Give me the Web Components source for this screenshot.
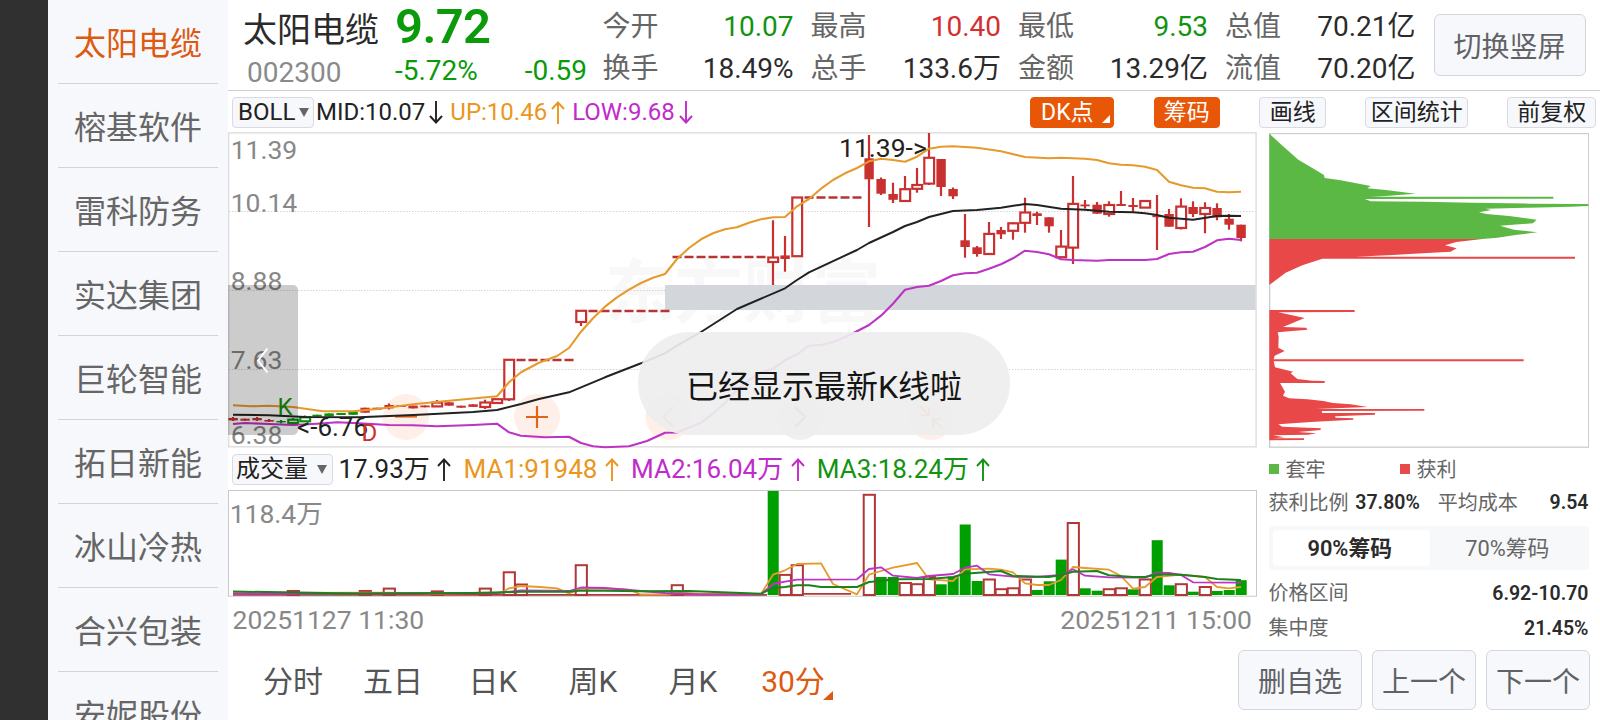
<!DOCTYPE html>
<html lang="zh-CN">
<head>
<meta charset="utf-8">
<title>太阳电缆 002300</title>
<style>
    body{
        margin: 0;
        width: 1600px;
        height: 720px;
        overflow: hidden;
        background: #fff;
        font-family: Roboto, "Noto Sans CJK SC", sans-serif;
    }
</style>
</head>
<body>
<stock-app></stock-app>

<script>
const make = (html) => {
    const template = document.createElement('template');
    template.innerHTML = html;
    return template;
};

class BaseElement extends HTMLElement {
    constructor(){
        super();
        this.attachShadow({mode:'open'});
        this.shadowRoot.appendChild(this.constructor.template.content.cloneNode(true));
    }
}

/* ---------- sidebar ---------- */

class StockItem extends BaseElement {
    static template = make(`
        <style>
            :host{
                display: block;
                flex: none;
                box-sizing: border-box;
                height: 84px;
                margin: 0 10px;
                border-bottom: 1px solid #d3d4d6;
                text-align: center;
                font-size: 32px;
                line-height: 89px;
                color: #666;
            }
            :host([active]){ color: #dc5a12; }
        </style>
        <slot></slot>
    `);
}

class StockList extends BaseElement {
    static template = make(`
        <style>
            :host{
                display: flex;
                flex-direction: column;
                flex: none;
                box-sizing: border-box;
                width: 228px;
                height: 720px;
                border-left: 48px solid #303030;
                background: #f7f8fb;
                overflow: hidden;
            }
        </style>
        <slot></slot>
    `);
}

/* ---------- header ---------- */

class QuoteStat extends BaseElement {
    static template = make(`
        <style>
            :host{
                display: flex;
                justify-content: space-between;
                height: 42px;
                line-height: 42px;
                font-size: 28px;
                color: #2b2b2b;
                white-space: nowrap;
            }
            .label{ color: #666; }
            :host([dir-up]){ color: #d33030; }
            :host([dir-down]){ color: #129312; }
        </style>
        <span class="label"></span><span><slot></slot></span>
    `);
    connectedCallback(){
        this.shadowRoot.querySelector('.label').textContent = this.getAttribute('label');
    }
}

class PlainButton extends BaseElement {
    static template = make(`
        <style>
            :host{
                display: flex;
                flex: none;
                align-items: center;
                justify-content: center;
                box-sizing: border-box;
                padding-top: 5px;
                border: 1px solid #d2d6dd;
                border-radius: 6px;
                background: #f7f8fb;
                font-size: 28px;
                line-height: 1;
                color: #606266;
                white-space: nowrap;
            }
        </style>
        <slot></slot>
    `);
}

class QuoteHeader extends BaseElement {
    static template = make(`
        <style>
            :host{
                display: flex;
                box-sizing: border-box;
                height: 91px;
                border-bottom: 1px solid #d0d0d0;
            }
            .name, .price{ flex: none; box-sizing: border-box; }
            .name{ width: 165px; padding-left: 15px; }
            .name div:first-child{ font-size: 34px; line-height: 56px; padding-top: 2px; color: #2b2b2b; }
            .name div:last-child{ font-size: 28px; line-height: 30px; padding-left: 4px; color: #8a8a8a; }
            .price{ width: 194px; padding-left: 2px; color: #0a9a0a; }
            .price b{ display: block; font-size: 49px; line-height: 54px; font-weight: 600; letter-spacing: -.6px; }
            .price div{ display: flex; justify-content: space-between; padding-top: 1px; font-size: 28px; line-height: 32px; }
            .stats{ display: grid; flex: none; grid-template-columns: 191px 190.5px 190px 190.5px; column-gap: 17px; align-content: start; padding: 6px 0 0 15.5px; }
            plain-button{ width: 152px; height: 62px; margin: 14px 0 0 18px; }
        </style>
        <div class="name"><div>太阳电缆</div><div>002300</div></div>
        <div class="price"><b>9.72</b><div><span>-5.72%</span><span>-0.59</span></div></div>
        <div class="stats">
            <quote-stat label="今开" dir-down>10.07</quote-stat>
            <quote-stat label="最高" dir-up>10.40</quote-stat>
            <quote-stat label="最低" dir-down>9.53</quote-stat>
            <quote-stat label="总值">70.21亿</quote-stat>
            <quote-stat label="换手">18.49%</quote-stat>
            <quote-stat label="总手">133.6万</quote-stat>
            <quote-stat label="金额">13.29亿</quote-stat>
            <quote-stat label="流值">70.20亿</quote-stat>
        </div>
        <plain-button>切换竖屏</plain-button>
    `);
}

/* ---------- indicator rows ---------- */

class IndicatorValue extends BaseElement {
    static template = make(`
        <style>
            :host{ display: flex; align-items: center; white-space: nowrap; }
            svg{ margin: 0 var(--after, 8px) 0 var(--before, 5px); }
            :host([down]) svg{ transform: scaleY(-1); }
        </style>
        <slot></slot>
        <svg width="14" height="23" viewBox="0 0 14 23" fill="none" stroke="currentColor" stroke-width="1.9"><path d="M7 23V1.5M1 8 7 1.5l6 6.5"/></svg>
    `);
}

class DropBox extends BaseElement {
    static template = make(`
        <style>
            :host{
                display: flex;
                flex: none;
                align-items: center;
                justify-content: space-between;
                box-sizing: border-box;
                height: 31px;
                padding: 0 4.5px;
                border: 1px solid #d9dbe0;
                border-radius: 4px;
                background: #f7f8fb;
                font-size: 24px;
                line-height: 29px;
                color: #222;
            }
        </style>
        <slot></slot>
        <svg width="10" height="9" viewBox="0 0 10 9"><path d="M0 0h10L5 9z" fill="#666"/></svg>
    `);
}

class ToolChip extends BaseElement {
    static template = make(`
        <style>
            :host{
                display: flex;
                flex: none;
                align-items: center;
                justify-content: center;
                position: relative;
                box-sizing: border-box;
                height: 31px;
                border: 1px solid #d9dbe0;
                border-radius: 4px;
                background: #f7f8fb;
                font-size: 23px;
                line-height: 29px;
                color: #222;
                white-space: nowrap;
            }
            :host([on]){ border-color: #e85708; background: #e85708; color: #fff; }
            svg{ display: none; position: absolute; right: 3px; bottom: 4px; }
            :host([more]) svg{ display: block; }
            :host([more]){ padding-right: 9px; }
        </style>
        <slot></slot>
        <svg width="8" height="8"><path d="M8 0v8H0z" fill="#fff"/></svg>
    `);
}

class IndicatorBar extends BaseElement {
    static template = make(`
        <style>
            :host{ display: flex; align-items: center; box-sizing: border-box; height: 41px; padding: 1px 3.7px 0 4px; font-size: 24px; line-height: 30px; --before: 4px; --after: 7px; }
            drop-box{ width: 82px; margin-right: 2px; padding-left: 5px; }
            .tools{ display: flex; margin-left: auto; }
        </style>
        <drop-box>BOLL</drop-box>
        <indicator-value style="color:#222" down>MID:10.07</indicator-value>
        <indicator-value style="color:#ea9620">UP:10.46</indicator-value>
        <indicator-value style="color:#c02bcb" down>LOW:9.68</indicator-value>
        <div class="tools">
            <tool-chip on more style="width:84px;margin-right:40px">DK点</tool-chip>
            <tool-chip on style="width:66px;margin-right:39.5px">筹码</tool-chip>
            <tool-chip style="width:67px;margin-right:39px">画线</tool-chip>
            <tool-chip style="width:103px;margin-right:39px">区间统计</tool-chip>
            <tool-chip style="width:89px">前复权</tool-chip>
        </div>
    `);
}

/* ---------- charts ---------- */

const STEP = 12, FIRST = 233;
const cx = (i) => FIRST + i * STEP;
const line = (points, color, width) =>
    `<polyline fill="none" stroke="${color}" stroke-width="${width}" stroke-linejoin="round" points="` +
    points.trim().split(/\s+/).map((p) => { const [i, y] = p.split(':'); return cx(+i) + ',' + y; }).join(' ') + '"/>';

// index, kind (r = red solid, h = red hollow, g = green solid, e = green hollow), body top, body bottom, high, low
const CANDLES = [
    [0,'r',418,420.4,417,421],[1,'r',418.7,420.7],[2,'r',418,420.3,417,421],[3,'r',420,421.6,419,422],
    [4,'g',421,422.4,420,423.5],[5,'e',419.7,423,418,424],[6,'e',417.3,421.3,415.5,422],[7,'g',414.7,416.5],
    [8,'g',413.4,416.4],[9,'g',413,415],[10,'g',412,414.8],[11,'r',407.7,412.7],[12,'r',407.7,409.7],
    [13,'r',405,408.4,403.5,409.5],[14,'r',405,407],[15,'r',405.6,408.4],[16,'r',405.5,407.3],[17,'h',402.6,406.4,400,407],
    [18,'r',402.3,405.7],[19,'r',405.7,407.7],[20,'r',404.3,406.9],[21,'h',402.5,407,399.7,409],[22,'h',399.2,403],
    [23,'h',359.8,399.3,359,401],[29,'h',310.8,322,310,326],
    [45,'h',257.5,262,220.3,285],[46,'r',255.4,259,236,271.7],[47,'h',197.5,256.2],
    [53,'r',158.3,179.3,135,227],[54,'r',179,193.7,177.5,195],[55,'r',194,199.8,182.7,203],[56,'h',189.2,201,176,202],
    [57,'h',185,188.8,168,192.7],[58,'h',157.8,183.6,133,185],[59,'r',159,187,159,196],[60,'r',189,196.3,187.5,199],
    [61,'r',240.3,247,214,257.7],[62,'r',247.3,254,246,256.7],[63,'h',233.9,254,222,255],[64,'r',230,234.3,227,239],
    [65,'h',223.3,230.8,222.5,239.7],[66,'h',212.5,222.8,197.7,232.7],[67,'r',213.3,216,211.7,225],[68,'r',217.3,226.3,217.3,232.7],
    [69,'h',246.6,257.2,230,258],[70,'h',203.9,247.6,176,264],[71,'r',204.5,206.3,200,208.5],[72,'r',204.7,213.7,202,213.7],
    [73,'h',205,214,201.3,216.7],[74,'r',204,206,191,206],[75,'r',205,207,198,211.7],[76,'h',201,207.6],
    [77,'r',215.2,217.2,195,250],[78,'r',214,226.7,209,226.7],[79,'h',206.6,228,198.3,229.5],[80,'r',207,214,201.3,217],
    [81,'h',208,214,202.3,233.3],[82,'r',208,217.3,203.3,220.3],[83,'r',218.7,224.7,214,229.7],[84,'r',224.7,238,224.7,241.3]
];
// limit-up runs: from, to, price level
const FLATS = [[24,28,360],[30,36,311],[37,44,257],[48,52,197.5]];

const RED = '#c93030', GREEN = '#0a920a';

const candle = ([i, kind, top, bottom, high = top, low = bottom]) => {
    const x = cx(i), color = 'ge'.includes(kind) ? GREEN : RED;
    let out = '';
    if (kind === 'h' || kind === 'e') {
        if (high < top) out += `<path d="M${x} ${high}V${top}" stroke="${color}" stroke-width="2.2"/>`;
        if (low > bottom) out += `<path d="M${x} ${bottom}V${low}" stroke="${color}" stroke-width="2.2"/>`;
        out += `<rect x="${x - 4.7}" y="${top}" width="9.8" height="${bottom - top}" fill="#fff" stroke="${color}" stroke-width="2.2"/>`;
    } else {
        out += `<path d="M${x} ${high}V${low}" stroke="${color}" stroke-width="2.2"/>`;
        out += `<rect x="${x - 4.6}" y="${top}" width="9.4" height="${bottom - top}" fill="${color}"/>`;
    }
    return out;
};

const UP = `0:405.3 1.5:406.3 3:405.7 5:407 7.5:411.3 10:411.3 12:409 15:404.3 18:400.7 22:396.3 23:382.3 24:372.3 25.5:362.7 27:356 28:348
    29:331.7 30:318.3 31:306.7 32:297.3 33:289.7 34:283 35:277.7 36:274 37:259 38:248 39:239.3 40:233.3 41:229.3 42:227.3 43:222.7 44:219.3
    45:217.3 46:217 47:206.3 48:199 49:188.7 50:180 51:173.3 52:168 53:161.3 54:158.7 55:160 56:161.7 57:156.7 58:148.7 59:146.7 60:146.3
    62:147.7 64:151.3 66:157 68:158.3 69:157.7 71:158.7 72:160 73:163.3 74:164.7 75:165.3 76:166.7 77:170 78:181.7 79:185.3 80:187.7
    81:188.3 82:191.7 83:192.3 84:191.7`;
const MID = `0:414.7 3:415.3 6:417 10.5:417.3 13:416 15.5:414.7 20:412 22:410 24:404 25.5:399 28:392.3 31:377.3 34:363.3 36:353.3 37:345.7
    39:332 42:309 46:288.3 47:280 48:272.3 52:250 53:243 55:232 56:226 57:222 58:217 60:211 62:210 64:207.7 66:204 67:205 69:208.7 71:209.7
    73:211.7 75:212.3 76:213.3 77:215 78:217.7 80:219.7 82:216 83:215.7 84:216`;
const LOW = `0:424 1:423 3:424 5:425 7:423.7 8.7:422.3 10.5:423.3 13:425 15:425.3 17:426.3 20:425 22:423.7 23:432.3 24:435.7 26:437.3 28:436.7
    29:443 30:446.3 31:447.2 33:446.3 34.5:441 36:432.7 37:432.5 39:422.7 40:413.7 41:402.7 42:390 43:380 44:372.3 45:368.7 46:360.3
    47:354.3 48:345.7 49:345 50:342 51:337.3 52:331.3 53:325 54:315.7 55:303.7 56:289.7 57:287 58:285.7 59:281 60:275.3 61:273.3 62:272.7
    63:268.7 64:264.3 65:258.3 66:250.7 67:252 68:254.3 69:259.3 70:260 72:260.7 73:260 76:260 77:259 78:254 79:252.3 80:251.7 81:247
    82:240.3 83:238.7 84:240`;

class KlineChart extends BaseElement {
    static template = make(`
        <style>
            :host{ display: block; position: relative; height: 316px; }
            svg{ display: block; overflow: visible; }
            text{ font-size: 26px; }
            .toast{
                position: absolute;
                left: 410px;
                top: 200px;
                width: 372px;
                height: 103px;
                border-radius: 52px;
                background: rgba(238, 238, 238, .92);
                text-align: center;
                font-size: 32px;
                line-height: 110px;
                color: #151515;
            }
        </style>
        <svg width="1029" height="316" viewBox="228 132 1029 316"></svg>
        <div class="toast">已经显示最新K线啦</div>
    `);
    connectedCallback(){
        const axis = [['11.39',158.7],['10.14',212],['8.88',289.7],['7.63',368.7],['6.38',443.7]]
            .map(([t, y]) => `<text x="230.7" y="${y}" fill="#888" style="font-size:26.5px">${t}</text>`).join('');
        const grid = [211.5, 290.5, 369.5]
            .map((y) => `<path d="M229 ${y}H1255" stroke="#d4d4d4" stroke-dasharray="1.5 1.5"/>`).join('');
        const flats = FLATS.map(([a, b, y]) => {
            let d = '';
            for (let i = a; i <= b; i++) d += `M${cx(i) - 4.5} ${y}h9`;
            return `<path d="${d}" stroke="#b83434" stroke-width="2.6"/>`;
        }).join('');
        const round = (x, fill, stroke, d) =>
            `<circle cx="${x}" cy="417" r="23" fill="${fill}"/><path transform="translate(${x} 417)" d="${d}" fill="none" stroke="${stroke}" stroke-width="2.2"/>`;
        const buttons =
            round(406, '#fef0e8', '#e0641c', 'M-11-.5H11') +
            round(537, '#fef0e8', '#e0641c', 'M-11 0H11M0-11V11') +
            round(668.5, '#fef0e8', '#f08a50', 'M5-10-5 0 5 10') +
            round(800, '#f0f0f0', '#888', 'M-5-10 5 0-5 10') +
            round(931, '#fef0e8', '#f08a50', 'M-11-11-2-2M-2-10V-2H-10M11 11 2 2M2 10V2H10');
        this.shadowRoot.querySelector('svg').innerHTML = `
            <text x="605" y="317" style="font-size:69px;font-weight:700" fill="#f8f8f8">东方财富</text>
            ${grid}
            <path d="M665 285h591v25H665z" fill="#d3d7dc"/>
            <rect x="228.7" y="132.8" width="1027.4" height="314" fill="none" stroke="#e0e0e0" stroke-width="1.5"/>
            ${axis}${buttons}${flats}${CANDLES.map(candle).join('')}
            ${line(UP, '#e79a2c', 2.1)}${line(MID, '#222', 2)}${line(LOW, '#bd33c4', 2.1)}
            <text x="839" y="156.7" fill="#222" style="font-size:26.5px">11.39-&gt;</text>
            <text x="297" y="436" fill="#222">&lt;-6.76</text>
            <text x="277.5" y="415" style="font-size:24px" fill="#129312">K</text>
            <text x="361.5" y="441.3" style="font-size:24px" fill="#cd2f2f">D</text>
            <path d="M228 285h65a5 5 0 0 1 5 5v140a5 5 0 0 1-5 5h-65z" fill="#000" fill-opacity=".2"/>
            <path d="M267.5 348.5 258 360.5 267.5 372.5" fill="none" stroke="#fff" stroke-width="2"/>`;
    }
}

// index, kind, bar top
const VOLUMES = [
    [5,'h',591],[6,'g',592.5],[7,'g',592.5],[8,'g',593],[9,'g',593],[10,'g',593],[11,'h',591],[13,'h',588.6],[17,'h',591.4],[21,'h',588.6],
    [23,'h',572.3],[24,'h',584.5],[29,'h',565.2],[37,'h',585.2],[45,'g',491],[46,'h',574.9],[47,'h',565.2],[53,'h',494.8],[54,'g',577],
    [55,'g',577],[56,'h',583],[57,'h',584.2],[58,'h',577],[59,'g',584.3],[60,'g',576.7],[61,'g',524.5],[62,'g',581],[63,'h',579.5],
    [64,'h',589.2],[65,'h',588.3],[66,'h',579.5],[67,'g',590],[68,'g',581.3],[69,'g',559.6],[70,'h',523],[71,'g',588.3],[72,'g',590.7],
    [73,'h',589.2],[74,'h',588.3],[75,'g',589.3],[76,'h',579.5],[77,'g',540.2],[78,'g',585.3],[79,'h',584.2],[80,'g',591.7],[81,'h',587],
    [82,'g',591],[83,'g',590],[84,'g',580.2]
];
const MA1 = `0:593 12.8:592.7 17:593.5 22.4:592.5 23:588.3 24:586 25.6:587 27:588.3 28:593.3 29:588.3 32.3:589 33:589.7 34:594.5 36:594.3 37.2:592.7
    39:594 44:594 45:574.7 46:570.3 47:564 49:563.3 50:584 52:594.3 53:574.7 54:571 55:567.7 57:563 58:579.3 60:581 61:569.3 63:568.7 64:569.7
    65:572.3 66:583.3 67:585 68:585 69:580 70:567 71:568 73:569.7 74:576 75:588.7 76:587 77:577 79:574.7 81:577 82:587 83:588.3 84:587`;
const MA2 = `0:594 22:593 24:590.5 28:591 29:587.5 31:588 33:590 36:593 39:594.3 44:594.3 45:584 46:581.7 47:579.7 52:579.3 53:569 54:567.3
    55:575.7 57:578 58:576 60:574 61:567.7 62:565.7 63:574.3 65:576.7 67:577 69:575 70:569.3 71:575.7 73:577.3 76:577.7 77:572.7 78:573
    79:575 80:582.3 84:582.7`;
const MA3 = `0:591.5 10:593.5 20:593 22:592.5 24:591.7 28:591.7 29:590.5 31:590.7 34:591.3 38:591 44:593.7 45:588 46:587 47:585.3 48:585.3
    49:587 52:587 53:582 54:581 55:579.3 58:579 60:577 61:573.7 64:571 65:576 68:577 69:575 70:571.7 72:571 73:575.3 75:577 76:577
    77:574.3 79:574.7 81:577 82:579 84:580`;

class VolumeChart extends BaseElement {
    static template = make(`
        <style>
            :host{ display: block; }
            .bar{ display: flex; align-items: center; height: 42px; padding-left: 4px; font-size: 26px; line-height: 30px; --before: 7.5px; --after: 12.2px; }
            drop-box{ width: 101px; margin-right: 5.5px; padding: 0 5px 0 3px; }
            svg{ display: block; }
            .dates{ display: flex; justify-content: space-between; padding: 6px 5px 0 4.5px; font-size: 26.5px; line-height: 33px; color: #888; }
        </style>
        <div class="bar">
            <drop-box>成交量</drop-box>
            <indicator-value style="color:#222">17.93万</indicator-value>
            <indicator-value style="color:#ea9620">MA1:91948</indicator-value>
            <indicator-value style="color:#c02bcb">MA2:16.04万</indicator-value>
            <indicator-value style="color:#129312">MA3:18.24万</indicator-value>
        </div>
        <svg width="1029" height="107" viewBox="228 490 1029 107"></svg>
        <div class="dates"><span>20251127 11:30</span><span>20251211 15:00</span></div>
    `);
    connectedCallback(){
        const bars = VOLUMES.map(([i, kind, y]) => kind === 'g'
            ? `<rect x="${cx(i) - 5.3}" y="${y}" width="11" height="${595 - y}" fill="#009f00"/>`
            : `<rect x="${cx(i) - 5.3}" y="${y}" width="11.2" height="${595 - y}" fill="#fff" stroke="#b03838" stroke-width="2"/>`).join('');
        this.shadowRoot.querySelector('svg').innerHTML = `
            <rect x="228.5" y="490.5" width="1028" height="105.7" fill="none" stroke="#c8c8c8"/>
            <text x="229.7" y="522.7" font-size="26.5" fill="#888">118.4万</text>
            <path d="M233 594.8H767M791 593.8H851" stroke="#b03838" stroke-width="1.8"/>
            ${bars}${line(MA1, '#e79a2c', 1.8)}${line(MA2, '#bd33c4', 1.8)}${line(MA3, '#1c821c', 2)}`;
    }
}

/* ---------- chip distribution ---------- */

class ChipPanel extends BaseElement {
    static template = make(`
        <style>
            :host{ display: block; width: 320px; font-size: 20px; color: #666; }
            svg{ display: block; }
            .legend, .row, .tabs, .tabs div{ display: flex; align-items: center; }
            .legend{ height: 41px; }
            .legend span{ width: 114px; }
            .legend i{ width: 10px; height: 10px; margin-right: 7px; background: #5cb845; }
            .legend i.red{ background: #e64a4a; }
            .row{ justify-content: space-between; height: 35px; line-height: 35px; }
            .row b{ color: #2b2b2b; font-weight: 600; font-size: 19.5px; }
            .row.top{ height: 26px; line-height: 26px; padding-top: 1px; }
            .tabs{ box-sizing: border-box; height: 44px; margin: 10px 0 6px; padding: 4px; border-radius: 4px; background: #f7f8fa; font-size: 21.8px; line-height: 32px; }
            .tabs div{ box-sizing: border-box; flex: 1; height: 36px; justify-content: center; padding-top: 1px; border-radius: 4px; }
            .tabs .on{ padding-right: 3px; background: #fff; color: #2b2b2b; font-weight: 600; }
        </style>
        <svg width="320" height="315" viewBox="40 24 960 945">
            <rect x="42" y="25.5" width="957" height="941" fill="#fff" stroke="#ccc" stroke-width="4"/>
            <path fill="#5cb845" d="M41 26 78 60 128 104 165 126 205 150 207 159 255 166 345 183 335 190 390 195 480 206 390 213 343 215 893 215V221L328 222 345 229 505 230 648 233 820 236 998 237V243L945 245 820 248 690 251 707 255 670 262 692 267 760 273 843 284 832 295 733 302 775 314 845 322 780 330 725 338 680 342H41z"/>
            <path fill="#e84848" d="M41 342H680L602 351 568 361 603 370 585 380 528 383 410 390 300 395 958 395V401L200 401 140 421 90 443 41 480z"/>
            <path fill="#e84848" d="M41 555H297V561L68 562 147 579 82 606 152 608 155 614 66 622 69 635 68 668 87 678 57 692 54 703H804V709H54L58 727 112 740 105 745 125 762 170 767 207 768V774H73L88 800 82 812 100 820 155 823 203 828 232 834 285 838 336 846 180 852H506V857L198 858 200 864H358V869L238 874 240 878 293 880V884L178 890 122 894 68 898 80 905 195 910V915L127 921 182 925 157 929 52 931 86 937 52 940H145V945L41 946z"/>
        </svg>
        <div class="legend"><i></i><span>套牢</span><i class="red"></i>获利</div>
        <div class="row top"><span>获利比例</span><b style="margin-right:11px">37.80%</b><span style="margin-right:25px">平均成本</span><b>9.54</b></div>
        <div class="tabs"><div class="on">90%筹码</div><div>70%筹码</div></div>
        <div class="row"><span>价格区间</span><b>6.92-10.70</b></div>
        <div class="row"><span>集中度</span><b>21.45%</b></div>
    `);
}

/* ---------- bottom bar ---------- */

class PeriodTab extends BaseElement {
    static template = make(`
        <style>
            :host{ display: block; position: relative; width: 100px; text-align: center; font-size: 30px; line-height: 64px; color: #555; }
            :host([active]){ color: #dc5a12; }
            svg{ display: none; position: absolute; right: 10px; top: 41px; }
            :host([active]) svg{ display: block; }
        </style>
        <slot></slot>
        <svg width="10" height="9"><path d="M10 0v9H0z" fill="#dc5a12"/></svg>
    `);
}

class BottomBar extends BaseElement {
    static template = make(`
        <style>
            :host{ display: flex; gap: 10px; padding: 0 10px 0 15px; }
            nav{ display: flex; margin-right: auto; }
            plain-button{ width: 104px; height: 60px; }
        </style>
        <nav>
            <period-tab>分时</period-tab>
            <period-tab>五日</period-tab>
            <period-tab>日K</period-tab>
            <period-tab>周K</period-tab>
            <period-tab>月K</period-tab>
            <period-tab active>30分</period-tab>
        </nav>
        <plain-button style="width:124px">删自选</plain-button>
        <plain-button>上一个</plain-button>
        <plain-button>下一个</plain-button>
    `);
}

class StockApp extends BaseElement {
    static template = make(`
        <style>
            :host{ display: flex; height: 720px; }
            main{ display: flex; flex-direction: column; width: 1372px; }
            .body{ display: flex; height: 518px; }
            .charts{ width: 1029px; margin-right: 11.5px; }
            chip-panel{ margin-top: 1px; }
        </style>
        <stock-list>
            <stock-item active>太阳电缆</stock-item>
            <stock-item>榕基软件</stock-item>
            <stock-item>雷科防务</stock-item>
            <stock-item>实达集团</stock-item>
            <stock-item>巨轮智能</stock-item>
            <stock-item>拓日新能</stock-item>
            <stock-item>冰山冷热</stock-item>
            <stock-item>合兴包装</stock-item>
            <stock-item>安妮股份</stock-item>
        </stock-list>
        <main>
            <quote-header></quote-header>
            <indicator-bar></indicator-bar>
            <div class="body">
                <div class="charts">
                    <kline-chart></kline-chart>
                    <volume-chart></volume-chart>
                </div>
                <chip-panel></chip-panel>
            </div>
            <bottom-bar></bottom-bar>
        </main>
    `);
}

customElements.define('stock-item', StockItem);
customElements.define('stock-list', StockList);
customElements.define('quote-stat', QuoteStat);
customElements.define('plain-button', PlainButton);
customElements.define('quote-header', QuoteHeader);
customElements.define('indicator-value', IndicatorValue);
customElements.define('drop-box', DropBox);
customElements.define('tool-chip', ToolChip);
customElements.define('indicator-bar', IndicatorBar);
customElements.define('kline-chart', KlineChart);
customElements.define('volume-chart', VolumeChart);
customElements.define('chip-panel', ChipPanel);
customElements.define('period-tab', PeriodTab);
customElements.define('bottom-bar', BottomBar);
customElements.define('stock-app', StockApp);
</script>
</body>
</html>
